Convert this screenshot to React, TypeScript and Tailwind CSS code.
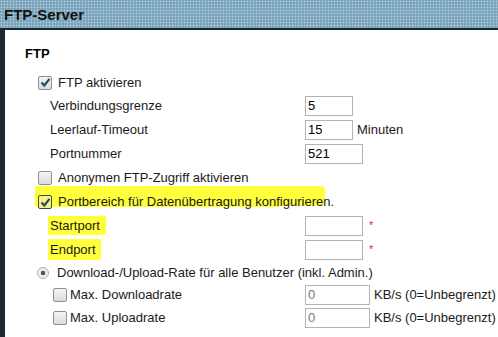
import React from "react";

const font = { fontFamily: '"Liberation Sans", Arial, sans-serif' };

function Check({ checked, hl }: { checked?: boolean; hl?: boolean }) {
  return (
    <span
      className={
        "inline-flex w-[14px] h-[14px] items-center justify-center rounded-[2px] border shrink-0 " +
        (hl
          ? "border-[#4a4a2a] bg-[#f4f48a]"
          : "border-[#8f8f8f] bg-[linear-gradient(#f4f4f4,#dcdcdc)]")
      }
    >
      {checked && (
        <svg width="11" height="11" viewBox="0 0 11 11">
          <path d="M1.5 5.5 L4.3 8.5 L9.5 1.8" fill="none" stroke="#2c4a5c" strokeWidth="2.2" />
        </svg>
      )}
    </span>
  );
}

function Input({ value, w, gray }: { value?: string; w: number; gray?: boolean }) {
  return (
    <span
      className={
        "inline-flex items-center h-[20px] border border-[#b4b4b4] bg-white text-[13px] pl-[2px] shrink-0 " +
        (gray ? "text-[#777]" : "text-black")
      }
      style={{ width: w }}
    >
      {value}
    </span>
  );
}

function Row({ children, h = 24 }: { children: React.ReactNode; h?: number }) {
  return (
    <div className="flex items-center whitespace-nowrap" style={{ height: h }}>
      {children}
    </div>
  );
}

export default function App() {
  return (
    <div className="w-[498px] h-[337px] overflow-hidden bg-white text-[13px] text-[#1a1a1a]" style={font}>
      <div className="h-[28px] bg-[#78a3bb] bg-[radial-gradient(circle,#b6d2e0_0.7px,transparent_1.1px)] bg-size-[3px_3px] flex items-center pl-[4px] pt-[2px]">
        <span className="text-[15px] font-bold text-[#111]">FTP-Server</span>
      </div>
      <div className="flex h-[309px]">
        <div className="w-[4px] shrink-0 bg-[#1b2833]" />
        <div className="flex-1 min-w-0 overflow-hidden border-t-2 border-l border-[#1b2833] bg-white relative">
          <div className="pl-[20px] pt-[14px] text-[13px] font-bold text-black h-[34px]">FTP</div>
          <div className="pl-[33px] pt-[7px]">
            <Row h={23}>
              <Check checked />
              <span className="ml-[6px]">FTP aktivieren</span>
            </Row>
            <Row>
              <span className="ml-[12px] w-[255px] shrink-0">Verbindungsgrenze</span>
              <Input value="5" w={48} />
            </Row>
            <Row>
              <span className="ml-[12px] w-[255px] shrink-0">Leerlauf-Timeout</span>
              <Input value="15" w={48} />
              <span className="ml-[4px]">Minuten</span>
            </Row>
            <Row>
              <span className="ml-[12px] w-[255px] shrink-0">Portnummer</span>
              <Input value="521" w={58} />
            </Row>
            <Row>
              <Check />
              <span className="ml-[6px]">Anonymen FTP-Zugriff aktivieren</span>
            </Row>
            <Row>
              <span className="relative flex items-center">
                <span className="absolute left-[-3px] top-[-6px] w-[290px] h-[20px] bg-[#ffff3c] rounded-[3px]" />
                <span className="absolute left-[-4px] top-[10px] w-[250px] h-[5px] bg-[#ffff3c] rounded-b-full skew-x-[-20deg]" />
                <span className="relative flex items-center">
                  <Check checked hl />
                  <span className="ml-[6px]">Portbereich für Datenübertragung konfigurieren.</span>
                </span>
              </span>
            </Row>
            <Row>
              <span className="ml-[12px] w-[255px] shrink-0">
                <span className="bg-[#ffff3c] pl-[2px] pr-[6px] py-[2px] ml-[-2px]">Startport</span>
              </span>
              <Input w={58} />
              <span className="ml-[6px] text-[#c0392b] text-[11px] self-start mt-[3px]">*</span>
            </Row>
            <Row>
              <span className="ml-[12px] w-[255px] shrink-0">
                <span className="bg-[#ffff3c] pl-[2px] pr-[5px] py-[3px] ml-[-2px]">Endport</span>
              </span>
              <Input w={58} />
              <span className="ml-[6px] text-[#c0392b] text-[11px] self-start mt-[3px]">*</span>
            </Row>
            <Row h={21}>
              <span className="w-[12px] h-[12px] rounded-full border border-[#b0b0b0] bg-[radial-gradient(circle,#555_0_2px,#e8e8e8_2.5px,#fafafa)] -ml-[1px] shrink-0" />
              <span className="ml-[8px]">Download-/Upload-Rate für alle Benutzer (inkl. Admin.)</span>
            </Row>
            <Row h={23}>
              <span className="ml-[15px] flex items-center w-[252px] shrink-0">
                <Check />
                <span className="ml-[3px]">Max. Downloadrate</span>
              </span>
              <Input value="0" w={65} gray />
              <span className="ml-[4px]">KB/s (0=Unbegrenzt)</span>
            </Row>
            <Row h={24}>
              <span className="ml-[15px] flex items-center w-[252px] shrink-0">
                <Check />
                <span className="ml-[3px]">Max. Uploadrate</span>
              </span>
              <Input value="0" w={65} gray />
              <span className="ml-[4px]">KB/s (0=Unbegrenzt)</span>
            </Row>
          </div>
        </div>
      </div>
    </div>
  );
}
